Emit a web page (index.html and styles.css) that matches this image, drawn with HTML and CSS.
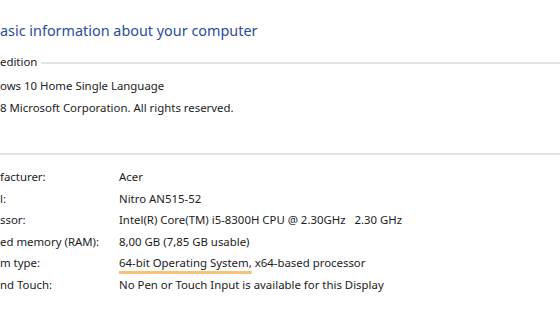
FILE: index.html
```html
<!DOCTYPE html>
<html lang="en">
<head>
    <meta charset="UTF-8">
    <meta name="viewport" content="width=device-width, initial-scale=1.0">
    <title>System</title>
    <link rel="stylesheet" href="styles.css">
</head>
<body>
    <div class="system-page">
        <h1 class="page-title">asic information about your computer</h1>

        <!-- Edition -->
        <div class="section-heading">
            <span>edition</span>
            <div class="section-line"></div>
        </div>
        <div class="edition-list">
            <div class="info-line">ows 10 Home Single Language</div>
            <div class="info-line">8 Microsoft Corporation. All rights reserved.</div>
        </div>

        <!-- System -->
        <div class="section-heading full">
            <div class="section-line"></div>
        </div>
        <div class="info-grid">
            <div class="info-label">facturer:</div>
            <div class="info-value">Acer</div>

            <div class="info-label">l:</div>
            <div class="info-value">Nitro AN515-52</div>

            <div class="info-label">ssor:</div>
            <div class="info-value">Intel(R) Core(TM) i5-8300H CPU @ 2.30GHz &nbsp; 2.30 GHz</div>

            <div class="info-label">ed memory (RAM):</div>
            <div class="info-value">8,00 GB (7,85 GB usable)</div>

            <div class="info-label">m type:</div>
            <div class="info-value"><span class="highlight">64-bit Operating System,</span> x64-based processor</div>

            <div class="info-label">nd Touch:</div>
            <div class="info-value">No Pen or Touch Input is available for this Display</div>
        </div>
    </div>
</body>
</html>
```

FILE: styles.css
```css
body {
    margin: 0;
    background: #fff;
    font-family: "Noto Sans", "Open Sans", sans-serif;
    font-size: 11.4px;
    color: #1b1b1b;
    overflow: hidden;
}

.system-page {
    width: 560px;
    height: 336px;
    padding-top: 20px;
    box-sizing: border-box;
}

.page-title {
    margin: 0;
    height: 22px;
    line-height: 22px;
    font-size: 14.4px;
    font-weight: normal;
    color: #2a4c9e;
}

.section-heading {
    display: flex;
    align-items: center;
    gap: 4px;
    margin-top: 10px;
    height: 20px;
    line-height: 20px;
}

.section-heading.full {
    margin-top: 34px;
    height: 2px;
}

.section-line {
    flex: 1;
    height: 2px;
    margin-top: 2px;
    background: #e4e4e4;
}

.section-heading.full .section-line {
    margin-top: 0;
}

.edition-list {
    margin-top: 3px;
}

.info-line {
    height: 22px;
    line-height: 22px;
}

.info-grid {
    display: grid;
    grid-template-columns: 119px 1fr;
    grid-auto-rows: 21.5px;
    align-items: center;
    margin-top: 11px;
    line-height: 21.5px;
}

.info-value {
    white-space: nowrap;
}

.highlight {
    text-decoration: underline;
    text-decoration-color: #f5c27a;
    text-decoration-thickness: 3px;
    text-underline-offset: 4px;
}
```
